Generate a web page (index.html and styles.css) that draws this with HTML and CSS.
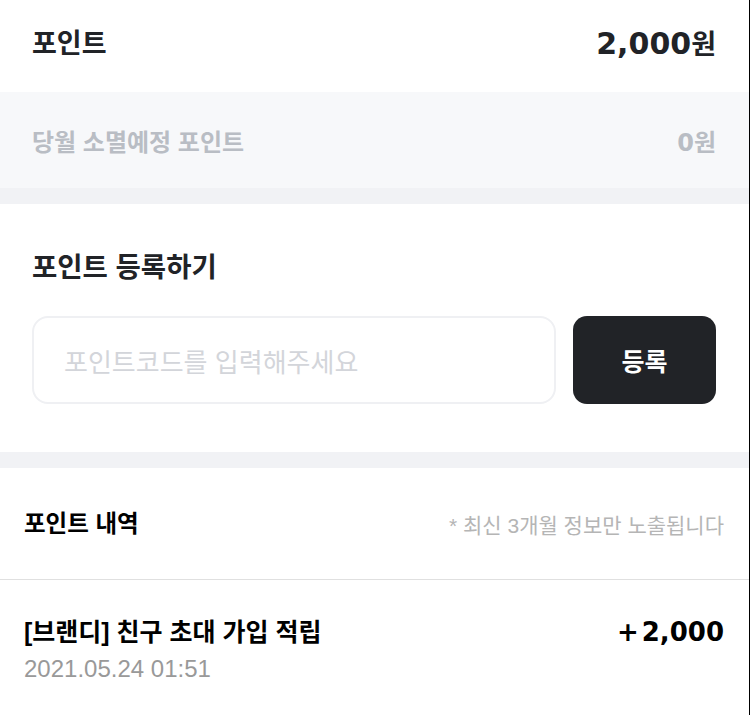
FILE: index.html
```html
<!DOCTYPE html>
<html lang="ko">
<head>
    <meta charset="UTF-8">
    <meta name="viewport" content="width=device-width, initial-scale=1.0">
    <title>포인트</title>
    <link rel="stylesheet" href="styles.css">
</head>
<body>
    <div class="page">
        <div class="total-row">
            <span class="total-label">포인트</span>
            <span class="total-value"><span class="num">2,000</span>원</span>
        </div>
        <div class="expire-row">
            <span>당월 소멸예정 포인트</span>
            <span><span class="num-light">0</span>원</span>
        </div>
        <div class="divider-band"></div>
        <section class="register">
            <h2>포인트 등록하기</h2>
            <div class="register-form">
                <input type="text" class="code-input" placeholder="포인트코드를 입력해주세요">
                <button class="register-button">등록</button>
            </div>
        </section>
        <div class="divider-band"></div>
        <div class="history-head">
            <h3>포인트 내역</h3>
            <span class="history-note">* 최신 3개월 정보만 노출됩니다</span>
        </div>
        <ul class="history-list">
            <li class="history-item">
                <div class="history-info">
                    <p class="history-title">[브랜디] 친구 초대 가입 적립</p>
                    <p class="history-date">2021.05.24 01:51</p>
                </div>
                <span class="history-amount"><span class="sign">+</span>2,000</span>
            </li>
        </ul>
    </div>
</body>
</html>
```

FILE: styles.css
```css
body {
    margin: 0;
    background-color: #fff;
    font-family: "Liberation Sans", "Noto Sans CJK KR", sans-serif;
    color: #212327;
}
.page {
    width: 749px;
    min-height: 715px;
    border-right: 1px solid #000;
}
p {
    margin: 0;
}
h2, h3 {
    margin: 0;
}
.total-row {
    height: 92px;
    padding: 0 33px 4px 32px;
    box-sizing: border-box;
    display: flex;
    align-items: center;
    justify-content: space-between;
}
.total-label {
    font-size: 27px;
    font-weight: bold;
    line-height: 32px;
}
.total-value {
    font-family: "DejaVu Sans", "Noto Sans CJK KR", sans-serif;
    font-weight: bold;
    font-size: 27px;
    line-height: 32px;
}
.total-value .num {
    font-size: 30px;
}
.expire-row {
    height: 96px;
    padding: 0 33px 0 32px;
    box-sizing: border-box;
    background-color: #f7f8fa;
    display: flex;
    align-items: center;
    justify-content: space-between;
    font-size: 24px;
    font-weight: bold;
    color: #b9bdc4;
}
.num-light {
    font-family: "DejaVu Sans", sans-serif;
    font-size: 24px;
}
.divider-band {
    height: 16px;
    background-color: #f1f2f5;
}
.register {
    padding: 46px 33px 48px 32px;
}
.register h2 {
    font-size: 27.5px;
    line-height: 36px;
    color: #212327;
}
.register-form {
    display: flex;
    gap: 17px;
    margin-top: 30px;
}
.code-input {
    flex: 1;
    height: 88px;
    box-sizing: border-box;
    border: 2px solid #eff0f3;
    border-radius: 16px;
    padding: 0 30px;
    font-family: "Noto Sans CJK KR", sans-serif;
    font-size: 26px;
    color: #212327;
    outline: none;
}
.code-input::placeholder {
    color: #d3d5da;
}
.register-button {
    width: 143px;
    height: 88px;
    border: none;
    border-radius: 14px;
    background-color: #212327;
    color: #fff;
    font-family: "Noto Sans CJK KR", sans-serif;
    font-size: 25px;
    font-weight: bold;
    cursor: pointer;
}
.history-head {
    height: 111px;
    padding: 0 25px 0 24px;
    display: flex;
    align-items: center;
    justify-content: space-between;
    border-bottom: 1px solid #e0e0e0;
}
.history-head h3 {
    font-size: 23.5px;
    line-height: 30px;
    color: #000;
}
.history-note {
    font-size: 21px;
    color: #b5b5b5;
}
.history-list {
    list-style-type: none;
    margin: 0;
    padding: 0;
}
.history-item {
    display: flex;
    justify-content: space-between;
    align-items: flex-start;
    padding: 36px 25px 0 24px;
}
.history-title {
    font-size: 25px;
    font-weight: bold;
    line-height: 32px;
    color: #000;
}
.history-date {
    margin-top: 6px;
    font-size: 24px;
    line-height: 30px;
    color: #999;
}
.history-amount {
    font-family: "DejaVu Sans", sans-serif;
    font-weight: bold;
    font-size: 26px;
    line-height: 32px;
    color: #000;
}
.history-amount .sign {
    margin-right: 3px;
}
```
